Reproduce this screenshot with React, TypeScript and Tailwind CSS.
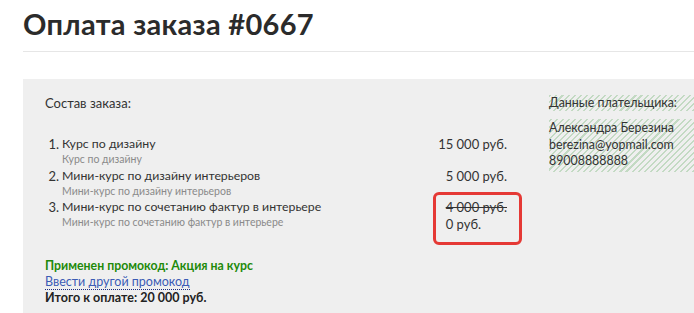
const items = [
  { name: 'Курс по дизайну', sub: 'Курс по дизайну', price: '15 000 руб.' },
  { name: 'Мини-курс по дизайну интерьеров', sub: 'Мини-курс по дизайну интерьеров', price: '5 000 руб.' },
  { name: 'Мини-курс по сочетанию фактур в интерьере', sub: 'Мини-курс по сочетанию фактур в интерьере', price: '4 000 руб.', final: '0 руб.' },
];

const hatch = 'bg-[repeating-linear-gradient(-45deg,#c3dac3_0px,#c3dac3_1.5px,transparent_1.5px,transparent_4.3px)]';

export default function App() {
  return (
    <div className="w-[694px] h-[313px] overflow-hidden bg-white pl-[23px] font-['Lato','Liberation_Sans',sans-serif] text-[#333]">
      {/* Title */}
      <div className="h-[52px] border-b border-[#e6e6e6] pt-[5px]">
        <h1 className="text-[29px] font-bold leading-[38px] tracking-[0.3px] text-[#2b2b2b]">Оплата заказа #0667</h1>
      </div>

      {/* Order panel */}
      <div className="mt-[27px] h-[240px] bg-[#efefef] pl-[22px] pt-[16px] flex">
        <div className="relative w-[462px] text-[13px]">
          <p className="leading-[16px]">Состав заказа:</p>

          <ol className="mt-[25px]">
            {items.map((item, i) => (
              <li key={i} className="flex h-[31.5px]">
                <span className="w-[17px] text-right pr-[3px] leading-[16px]">{i + 1}.</span>
                <div className="flex-1">
                  <p className="text-[12.3px] leading-[16px]">{item.name}</p>
                  <p className="text-[10.5px] leading-[15px] text-[#8a8a8a]">{item.sub}</p>
                </div>
                <div className="text-right leading-[17px]">
                  {item.final ? (
                    <>
                      <p className="line-through">{item.price}</p>
                      <p className="text-left">{item.final}</p>
                    </>
                  ) : (
                    <p>{item.price}</p>
                  )}
                </div>
              </li>
            ))}
          </ol>

          {/* highlight */}
          <div className="absolute left-[388px] top-[97px] w-[89px] h-[53px] rounded-[6px] border-[3px] border-[#e53935]" />

          <div className="mt-[27px] text-[12.5px] leading-[16px]">
            <p className="text-[12.3px] font-bold text-[#1e8a0a]">Применен промокод: Акция на курс</p>
            <a className="text-[#3b5bb5] border-b border-dotted border-[#1b2b80]">Ввести другой промокод</a>
            <p className="font-bold text-[#222]">Итого к оплате: 20 000 руб.</p>
          </div>
        </div>

        <div className="ml-[42px] flex-1 text-[12.4px]">
          <p className={`${hatch} leading-[16px]`}>Данные плательщика:</p>
          <div className={`${hatch} mt-[8px] pt-[1px] pb-[2px] leading-[16.5px]`}>
            <p>Александра Березина</p>
            <p>berezina@yopmail.com</p>
            <p>89008888888</p>
          </div>
        </div>
      </div>
    </div>
  );
}
